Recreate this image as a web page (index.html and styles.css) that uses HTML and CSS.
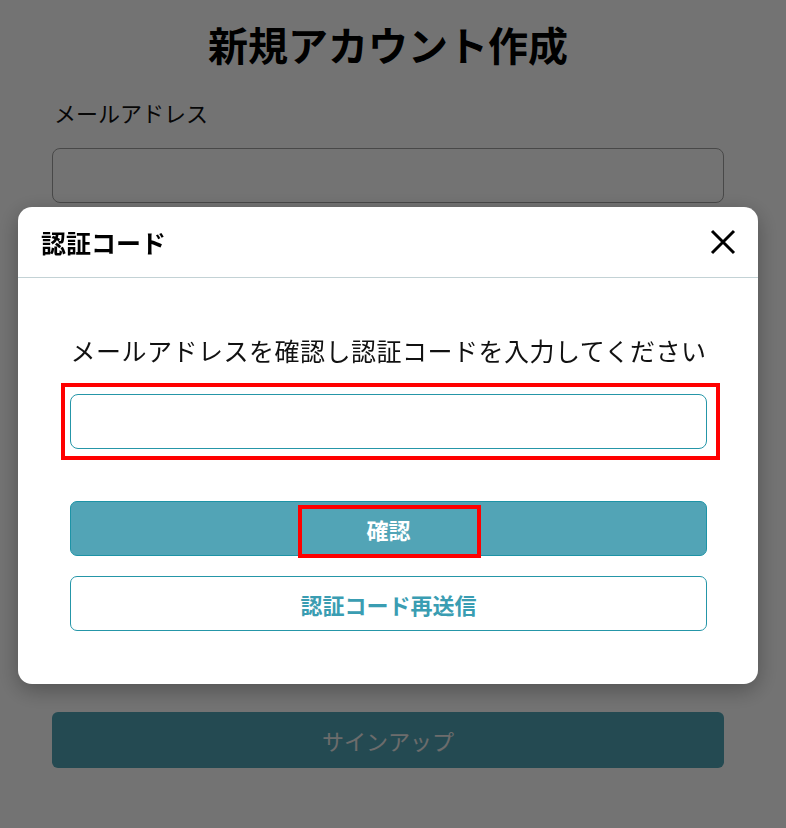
FILE: index.html
```html
<!DOCTYPE html>
<html lang="ja">
    <head>
        <meta charset="UTF-8" />
        <meta name="viewport" content="width=device-width, initial-scale=1.0" />
        <title>新規アカウント作成</title>
        <link rel="stylesheet" href="styles.css">
    </head>
    <body>
        <main class="signup">
            <h1>新規アカウント作成</h1>
            <label for="email">メールアドレス</label>
            <input id="email" class="field" type="email" />
            <button class="signupButton">サインアップ</button>
        </main>

        <div class="overlay">
            <section class="modal">
                <header class="modalHeader">
                    <h2>認証コード</h2>
                    <button class="closeButton" aria-label="閉じる">
                        <svg width="26" height="26" viewBox="0 0 26 26">
                            <path d="M2 2 L24 24 M24 2 L2 24" stroke="#000" stroke-width="3" fill="none" />
                        </svg>
                    </button>
                </header>

                <div class="modalBody">
                    <p class="message">メールアドレスを確認し認証コードを入力してください</p>
                    <div class="codeField">
                        <input class="codeInput" type="text" />
                        <span class="highlight codeHighlight"></span>
                    </div>
                    <button class="primary">
                        確認
                        <span class="highlight confirmHighlight"></span>
                    </button>
                    <button class="secondary">認証コード再送信</button>
                </div>
            </section>
        </div>
    </body>
</html>
```

FILE: styles.css
```css
body {
    font-family: "Noto Sans CJK JP", "Noto Sans", sans-serif;
    margin: 0;
    padding: 0;
    background-color: #fff;
    color: #111;
}

.signup {
    display: flex;
    flex-direction: column;
    padding: 20px 62px 0 52px;
}

h1 {
    margin: 0;
    font-size: 40px;
    line-height: 48px;
    text-align: center;
    color: #000;
}

.signup label {
    margin-top: 29px;
    font-size: 22px;
    line-height: 30px;
    padding-left: 2px;
}

.field {
    margin-top: 21px;
    height: 55px;
    box-sizing: border-box;
    border: 1.5px solid #a0a0a0;
    border-radius: 8px;
    background-color: #fff;
}

.signupButton {
    margin-top: 509px;
    height: 56px;
    border: none;
    border-radius: 6px;
    background-color: #50a4b6;
    color: #f0f0f0;
    font-family: inherit;
    font-size: 22px;
}

.overlay {
    position: fixed;
    inset: 0;
    display: flex;
    justify-content: center;
    align-items: flex-start;
    padding: 207px 10px 0 0;
    background-color: rgba(0, 0, 0, 0.55);
}

.modal {
    width: 740px;
    background-color: #fff;
    border-radius: 14px;
    box-shadow: 0 6px 22px rgba(0, 0, 0, 0.3);
}

.modalHeader {
    display: flex;
    align-items: center;
    justify-content: space-between;
    height: 70px;
    padding: 0 22px 0 23px;
    border-bottom: 1.5px solid #c3d2d5;
}

.modalHeader h2 {
    margin: 0;
    font-size: 25px;
    font-weight: bold;
    color: #000;
}

.closeButton {
    display: flex;
    padding: 0;
    border: none;
    background: none;
    cursor: pointer;
}

.modalBody {
    display: flex;
    flex-direction: column;
    padding: 0 51px 53px 52px;
}

.message {
    margin: 54px 0 0 0;
    font-size: 25px;
    line-height: 36px;
    letter-spacing: 0.5px;
    text-align: center;
    color: #111;
}

.codeField {
    position: relative;
    margin-top: 26px;
}

.codeInput {
    display: block;
    width: 100%;
    height: 55px;
    box-sizing: border-box;
    border: 1.5px solid #2596a8;
    border-radius: 8px;
    background-color: #fff;
}

.highlight {
    position: absolute;
    border: 4px solid #ff0000;
    pointer-events: none;
}

.codeHighlight {
    top: -11px;
    bottom: -11px;
    left: -9px;
    right: -13px;
}

.primary,
.secondary {
    position: relative;
    height: 55px;
    border-radius: 7px;
    font-family: inherit;
    font-size: 22px;
    font-weight: bold;
    cursor: pointer;
}

.primary {
    margin-top: 52px;
    border: 1.5px solid #1d93a6;
    background-color: #52a4b6;
    color: #fff;
}

.confirmHighlight {
    top: 3px;
    left: 227px;
    width: 175px;
    height: 45px;
}

.secondary {
    margin-top: 20px;
    border: 1.5px solid #2596a8;
    background-color: #fff;
    color: #3a9db2;
}
```
